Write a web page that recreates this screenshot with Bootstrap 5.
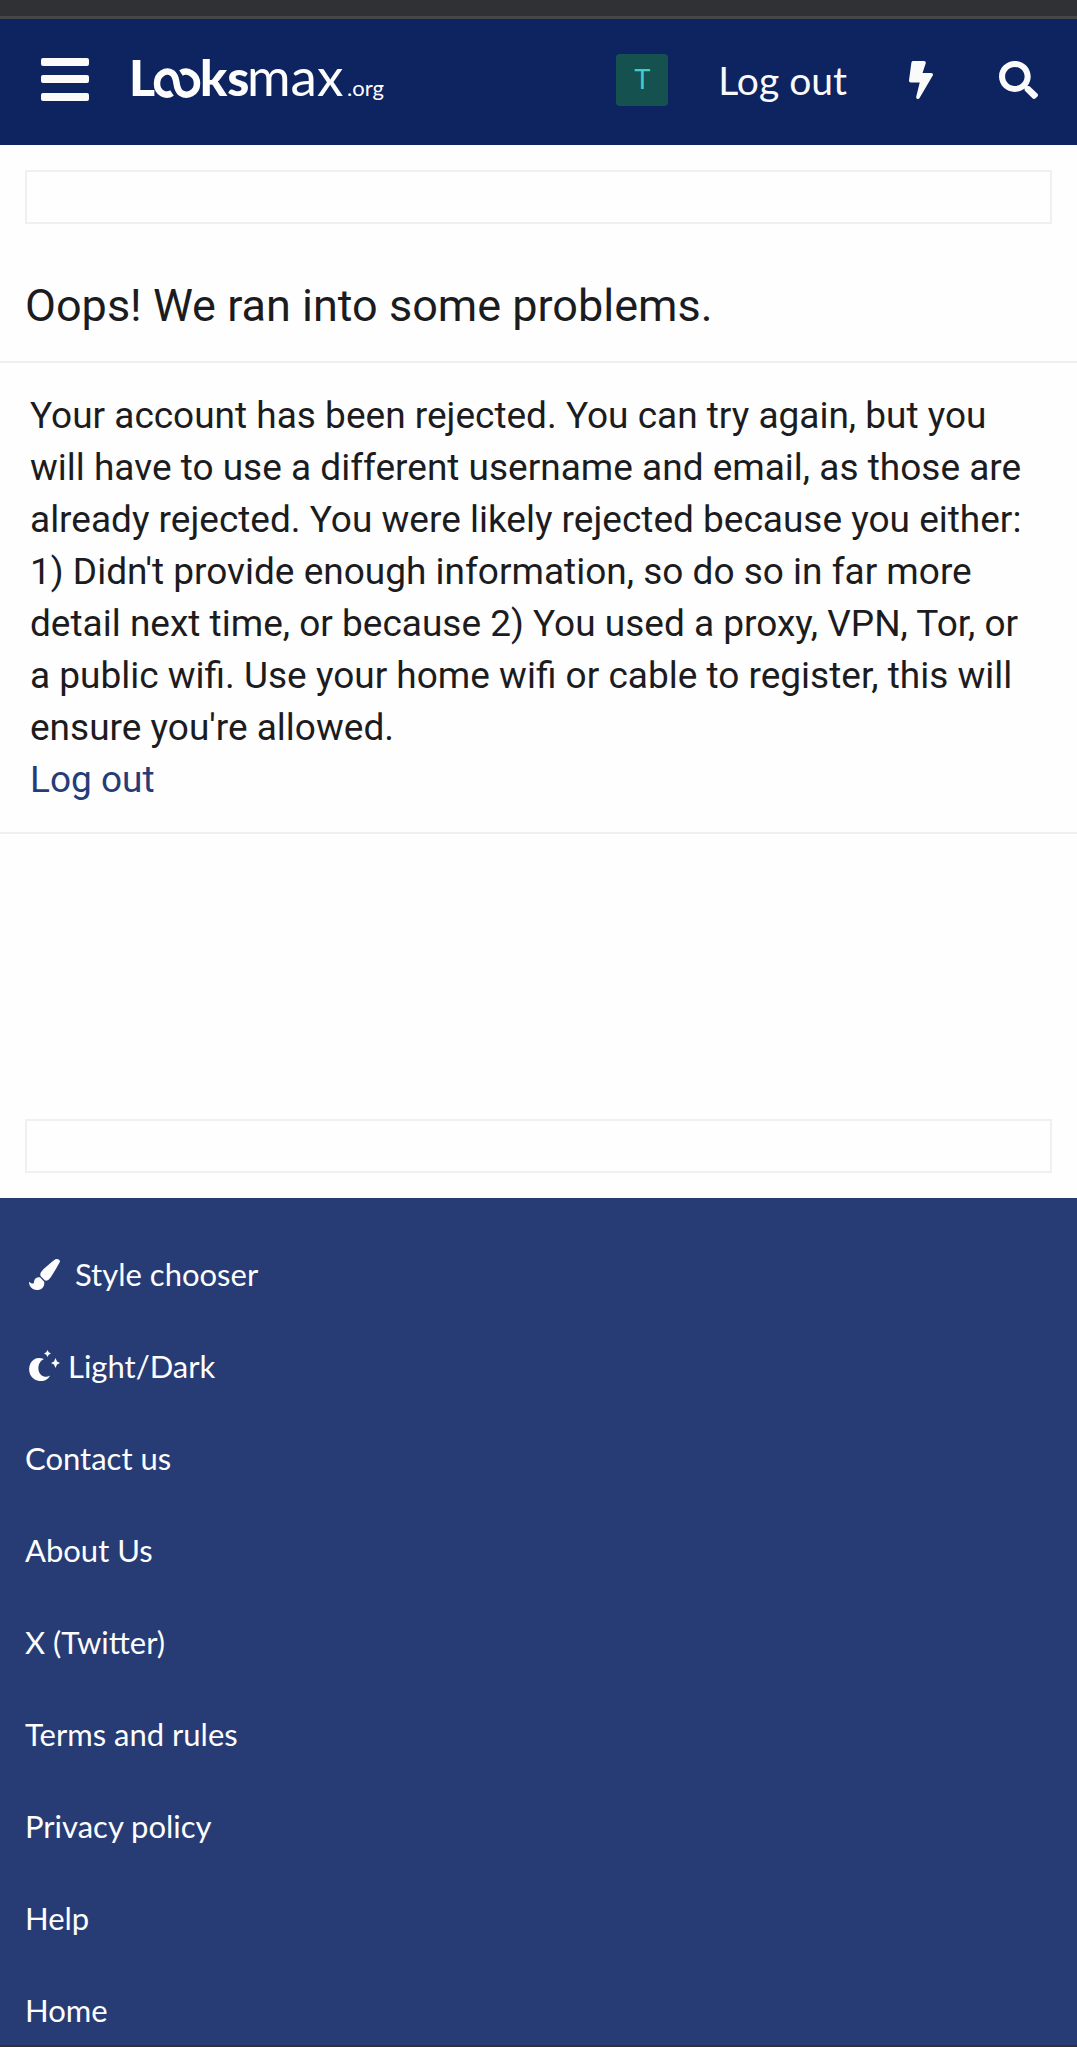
<!DOCTYPE html>
<html lang="en">
<head>
<meta charset="utf-8">
<meta name="viewport" content="width=device-width, initial-scale=1">
<title>Oops! We ran into some problems. | Looksmax.org</title>
<link rel="stylesheet" href="https://cdn.jsdelivr.net/npm/bootstrap@5.3.0/dist/css/bootstrap.min.css">
<style>
body{font-family:Roboto,"Liberation Sans",sans-serif;color:#1c1c1e;background:#fefefe}
a{text-decoration:none}
.browser-edge{height:19px;background:#303134;border-bottom:3px solid #45464a}
.site-header{height:126px;background:#0d2461;padding:0 39px 5px 40px;font-family:Lato,sans-serif}
.site-header button{background:none;border:0;padding:0;color:#fafafa;line-height:0}
.site-brand{margin-left:38px}
.site-avatar{width:52px;height:52px;border-radius:4px;background:#15514f;color:#41cbca;font:28px/52px Roboto,sans-serif}
.header-link{margin-left:50px;font-size:39px;line-height:48px;color:#fafafa}
.bolt-btn{margin-left:62px}
.search-btn{margin-left:66px}
.notice-box{height:54px;margin:25px 25px 0;border:2px solid #f0f0f0}
.page-title{margin:54px 0 0;padding:0 25px 28px;font-size:45px;line-height:55px;font-weight:400;border-bottom:2px solid #efefef}
.message-block{padding:27px 30px 26px;font-size:37px;line-height:52px;border-bottom:2px solid #f0f0f0}
.message-block a{color:#253c78}
.lower-box{margin-top:285px;margin-bottom:25px}
.site-footer{background:#273c75;border-bottom:2px solid #303134;padding:30px 25px 1px;font-family:Lato,sans-serif;font-size:31px;line-height:44px}
.site-footer a,.site-footer button{display:flex;align-items:center;padding:24px 0;color:#fdfdfe;background:none;border:0;line-height:44px}
.site-footer li:last-child a{padding-bottom:12px}
.site-footer svg{margin:0 0 0 4px}
.brush-gap{gap:15px}.moon-gap{gap:8px}
</style>
<script src="https://cdn.jsdelivr.net/npm/bootstrap@5.3.0/dist/js/bootstrap.bundle.min.js"></script>
</head>
<body>
<div class="browser-edge"></div>
<header class="site-header d-flex align-items-center">
  <button type="button" aria-label="Menu"><svg width="49" height="43" fill="#fafafa"><rect x="1" y="0" width="48" height="8" rx="2"/><rect x="1" y="17" width="48" height="8" rx="2"/><rect x="1" y="35" width="48" height="8" rx="2"/></svg></button>
  <a class="site-brand" href="#" aria-label="Looksmax.org">
    <svg class="d-block" width="264" height="70" fill="#fdfdfe" font-family="Lato, sans-serif" font-size="50">
      <text x="2" y="51" font-weight="900">L</text>
      <path d="M45 48C39 52 30 48 30 38.500S39 24 45 28C52 33 47 43 54 48C60 52 70 48 70 38.500S60 24 54 28" fill="none" stroke="#fdfdfe" stroke-width="6.500"/>
      <text x="73" y="51" font-weight="900">ks</text>
      <text x="120" y="51" font-size="53">max</text>
      <text x="220" y="51" font-size="22">.org</text>
    </svg>
  </a>
  <a class="site-avatar ms-auto text-center" href="#">T</a>
  <a class="header-link" href="#">Log out</a>
  <button class="bolt-btn" type="button" aria-label="What's new"><svg width="24" height="38" viewBox="0 0 320 512" preserveAspectRatio="none" fill="currentColor"><path d="M296 160H180.600l42.600-129.800C227.200 15 215.700 0 200 0H56C44 0 33.800 8.900 32.200 20.800l-32 240C-1.700 275.200 9.500 288 24 288h118.700L96.600 482.500c-3.600 15.200 8 29.500 23.300 29.500 8.400 0 16.400-4.400 20.800-12l176-304c9.300-15.900-2.200-36-20.700-36z"/></svg></button>
  <button class="search-btn" type="button" aria-label="Search"><svg width="39" height="38" viewBox="0 0 512 512" preserveAspectRatio="none" fill="currentColor"><path d="M505 442.700L405.300 343c-4.500-4.500-10.600-7-17-7H372c27.600-35.300 44-79.700 44-128C416 93.100 322.900 0 208 0S0 93.100 0 208s93.100 208 208 208c48.300 0 92.700-16.400 128-44v16.300c0 6.400 2.500 12.500 7 17l99.700 99.700c9.400 9.400 24.600 9.400 33.900 0l28.300-28.300c9.400-9.400 9.400-24.600.1-34zM208 336c-70.700 0-128-57.200-128-128 0-70.700 57.200-128 128-128 70.700 0 128 57.200 128 128 0 70.700-57.200 128-128 128z"/></svg></button>
</header>
<main>
  <div class="notice-box"></div>
  <h1 class="page-title">Oops! We ran into some problems.</h1>
  <div class="message-block">Your account has been rejected. You can try again, but you will have to use a different username and email, as those are already rejected. You were likely rejected because you either: 1) Didn't provide enough information, so do so in far more detail next time, or because 2) You used a proxy, VPN, Tor, or a public wifi. Use your home wifi or cable to register, this will ensure you're allowed.<br><a href="#">Log out</a></div>
  <div class="notice-box lower-box"></div>
</main>
<footer class="site-footer">
  <ul class="list-unstyled m-0 d-flex flex-column">
    <li><button class="brush-gap" type="button"><svg width="31" height="31" viewBox="0 0 512 512" fill="currentColor"><path d="M167 300c-50 0-82 35-84 76 0 50-45 30-83 0 0 75 50 136 128 136 82 0 125-50 125-117 0-7-1-13-2-19l-67-72c-5-3-11-4-17-4zM458 0c-15 0-29 7-40 16C214 180 187 218 187 255c0 15 3 26 10 36l62 62c6 4 14 5 22 5 47 0 74-34 214-284 9-17 17-35 17-28 0-30-23-46-54-46z"/></svg>Style chooser</button></li>
    <li><button class="moon-gap" type="button"><svg width="31" height="32" viewBox="0 0 31 32" fill="currentColor"><path d="M15 9C8 12 7 24 15 26.500q3 1 6-1C19 31 11 33 5 29C-2 24-1 13 5 9.500Q9 7 15 9zM18.500 0l1.200 2.300 2.300 1.200-2.300 1.200-1.200 2.300-1.200-2.300L15 3.500l2.300-1.200zM26.500 8l1.500 3.500 3 1.500-3 1.500-1.500 3.500-1.500-3.500-3-1.500 3-1.500z"/></svg>Light/Dark</button></li>
    <li><a href="#">Contact us</a></li>
    <li><a href="#">About Us</a></li>
    <li><a href="#">X (Twitter)</a></li>
    <li><a href="#">Terms and rules</a></li>
    <li><a href="#">Privacy policy</a></li>
    <li><a href="#">Help</a></li>
    <li><a href="#">Home</a></li>
  </ul>
</footer>
</body>
</html>
